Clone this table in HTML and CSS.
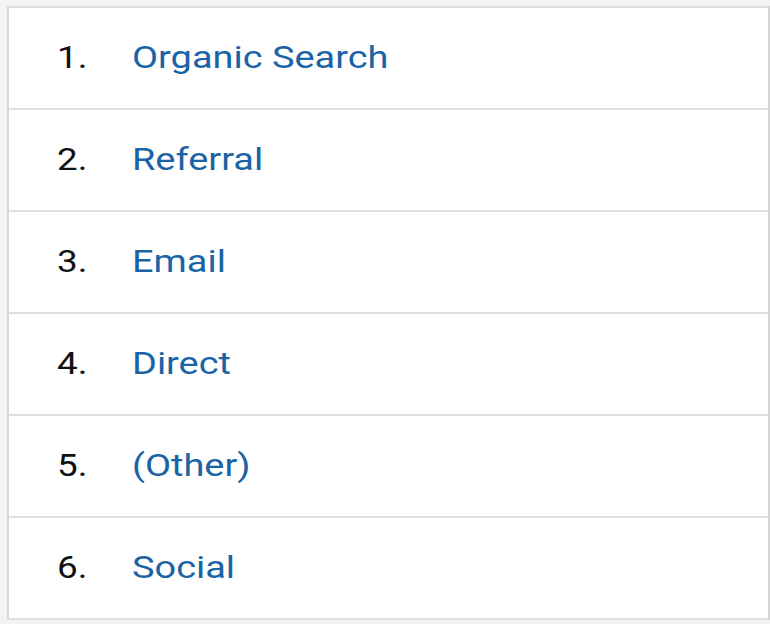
FILE: index.html
```html
<!DOCTYPE html>
<html>
<head>
<meta charset="utf-8">
<link rel="stylesheet" href="styles.css">
</head>
<body>
<div class="table">
  <div class="row"><span class="num">1.</span><a class="label">Organic Search</a></div>
  <div class="row"><span class="num">2.</span><a class="label">Referral</a></div>
  <div class="row"><span class="num">3.</span><a class="label">Email</a></div>
  <div class="row"><span class="num">4.</span><a class="label">Direct</a></div>
  <div class="row"><span class="num">5.</span><a class="label">(Other)</a></div>
  <div class="row"><span class="num">6.</span><a class="label">Social</a></div>
</div>
</body>
</html>
```
FILE: styles.css
```css
html, body {
  margin: 0;
  padding: 0;
  background: #f3f3f3;
  width: 770px;
  height: 624px;
  overflow: hidden;
}
.table {
  margin: 6px 0 0 7px;
  width: 759px;
  background: #fff;
  border-left: 2px solid #d6d6d6;
  border-right: 2px solid #d6d6d6;
  border-bottom: 2px solid #dedede;
  font-family: Roboto, "Noto Sans", sans-serif;
}
.row {
  height: 100px;
  border-top: 2px solid #dedede;
  display: flex;
  align-items: center;
}
.num {
  display: inline-block;
  width: 75px;
  margin-left: 48px;
  font-size: 32px;
  color: #111;
  transform: scaleX(1.15);
  transform-origin: left center;
  margin-top: -2px;
}
.label {
  display: inline-block;
  font-size: 32px;
  color: #1a63a5;
  text-decoration: none;
  transform: scaleX(1.185);
  transform-origin: left center;
  margin-top: -2px;
}
```
